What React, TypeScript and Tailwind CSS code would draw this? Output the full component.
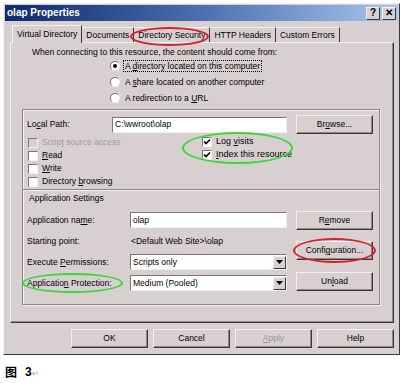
import React from 'react';

const face = "bg-[#d8d0d0]";

// underline the access key letter
const Key = ({ children }: { children: React.ReactNode }) => <span className="underline">{children}</span>;

const Button = ({ children, className = "", disabled = false }: { children: React.ReactNode; className?: string; disabled?: boolean }) => (
    <div
        className={`flex items-center justify-center h-[19px] w-[77px] ${face} border border-t-[#f4f0f0] border-l-[#f4f0f0] border-r-[#3c3838] border-b-[#3c3838] shadow-[inset_-1px_-1px_0_#8c8686] ${disabled ? "text-[#9a9494]" : ""} ${className}`}
    >
        {children}
    </div>
);

const Radio = ({ checked = false }: { checked?: boolean }) => (
    <div className="w-[10px] h-[10px] rounded-full bg-white border border-t-[#7c7676] border-l-[#7c7676] border-r-[#f4f0f0] border-b-[#f4f0f0] flex items-center justify-center shrink-0">
        {checked && <div className="w-[4px] h-[4px] rounded-full bg-black" />}
    </div>
);

const Check = ({ checked = false, disabled = false }: { checked?: boolean; disabled?: boolean }) => (
    <div
        className={`w-[10px] h-[10px] shrink-0 border border-t-[#7c7676] border-l-[#7c7676] border-r-[#f4f0f0] border-b-[#f4f0f0] flex items-center justify-center ${disabled ? face : "bg-white"}`}
    >
        {checked && (
            <svg width="8" height="8" viewBox="0 0 8 8">
                <path d="M1 3.5 L3 5.5 L7 1.5" stroke="#000" strokeWidth="1.6" fill="none" />
            </svg>
        )}
    </div>
);

const Field = ({ children, width }: { children?: React.ReactNode; width: string }) => (
    <div className={`${width} h-[16px] bg-white border border-t-[#7c7676] border-l-[#7c7676] border-r-[#f4f0f0] border-b-[#f4f0f0] flex items-center pl-[2px]`}>
        {children}
    </div>
);

const Select = ({ value }: { value: string }) => (
    <div className="w-[157px] h-[16px] bg-white border border-t-[#7c7676] border-l-[#7c7676] border-r-[#f4f0f0] border-b-[#f4f0f0] flex items-center justify-between pl-[2px]">
        <span>{value}</span>
        <div className={`w-[13px] h-[13px] ${face} border border-t-[#f4f0f0] border-l-[#f4f0f0] border-r-[#3c3838] border-b-[#3c3838] flex items-center justify-center`}>
            <svg width="7" height="4" viewBox="0 0 7 4">
                <path d="M0 0 H7 L3.5 4 Z" fill="#000" />
            </svg>
        </div>
    </div>
);

const Tab = ({ label, active = false }: { label: React.ReactNode; active?: boolean }) => (
    <div
        className={
            active
                ? `h-[18px] px-[4px] flex items-center ${face} border border-b-0 border-t-[#f4f0f0] border-l-[#f4f0f0] border-r-[#3c3838] relative z-10`
                : `h-[16px] px-[4px] flex items-center border-r border-r-[#3c3838] border-t border-t-[#f4f0f0]`
        }
    >
        {label}
    </div>
);

const Ellipse = ({ className }: { className: string }) => (
    <div className={`absolute rounded-[50%] pointer-events-none ${className}`} />
);

const App: React.FC = () => {
    return (
        <div className="w-[404px] h-[383px] bg-white relative font-['Liberation_Sans',Arial,sans-serif] text-[8.5px] text-black leading-none overflow-hidden">
            <div className={`ml-[3px] mt-[3px] w-[397px] h-[352px] ${face} border border-t-[#f4f0f0] border-l-[#f4f0f0] border-r-[#3c3838] border-b-[#3c3838] p-[1px] flex flex-col`}>
                {/* title bar */}
                <div className="h-[16px] bg-gradient-to-r from-[#0c2a6c] via-[#4d6fae] to-[#a8c8ee] flex items-center justify-between pl-[2px] pr-[2px]">
                    <span className="text-white font-bold text-[10px]">olap Properties</span>
                    <div className="flex gap-[2px]">
                        <div className={`w-[14px] h-[13px] ${face} border border-t-[#f4f0f0] border-l-[#f4f0f0] border-r-[#3c3838] border-b-[#3c3838] flex items-center justify-center font-bold text-[10px]`}>?</div>
                        <div className={`w-[14px] h-[13px] ${face} border border-t-[#f4f0f0] border-l-[#f4f0f0] border-r-[#3c3838] border-b-[#3c3838] flex items-center justify-center font-bold text-[10px]`}>✕</div>
                    </div>
                </div>

                {/* tabs */}
                <div className="mt-[4px] pl-[7px] flex items-end h-[18px]">
                    <Tab active label="Virtual Directory" />
                    <Tab label="Documents" />
                    <Tab label="Directory Security" />
                    <Tab label="HTTP Headers" />
                    <Tab label="Custom Errors" />
                </div>

                {/* tab panel */}
                <div className={`-mt-[1px] ml-[5px] w-[384px] h-[281px] border border-t-[#f4f0f0] border-l-[#f4f0f0] border-r-[#3c3838] border-b-[#3c3838] shadow-[inset_-1px_-1px_0_#8c8686] flex flex-col`}>
                    <div className="mt-[4px] pl-[21px] h-[11px] flex items-center">When connecting to this resource, the content should come from:</div>
                    <div className="pl-[99px] flex flex-col">
                        <div className="h-[16px] flex items-center gap-[4px]">
                            <Radio checked />
                            <span className="outline outline-1 outline-dotted outline-black px-[1px] py-[1px]">A <Key>d</Key>irectory located on this computer</span>
                        </div>
                        <div className="h-[16px] flex items-center gap-[5px]">
                            <Radio />
                            <span>A <Key>s</Key>hare located on another computer</span>
                        </div>
                        <div className="h-[16px] flex items-center gap-[5px]">
                            <Radio />
                            <span>A redirection to a <Key>U</Key>RL</span>
                        </div>
                    </div>

                    {/* group box */}
                    <div className="mt-[3px] ml-[11px] w-[358px] h-[196px] border border-[#8c8686] shadow-[1px_1px_0_#f4f0f0,inset_1px_1px_0_#f4f0f0] flex flex-col">
                        <div className="mt-[5px] pl-[4px] flex items-center h-[19px]">
                            <span className="w-[85px]">Lo<Key>c</Key>al Path:</span>
                            <Field width="w-[175px]">C:\wwroot\olap</Field>
                            <Button className="ml-[9px]">Br<Key>o</Key>wse...</Button>
                        </div>

                        <div className="mt-[2px] flex">
                            <div className="pl-[5px] w-[179px] flex flex-col">
                                <div className="h-[13px] flex items-center gap-[4px] text-[#a09a9a]">
                                    <Check disabled />
                                    <span>Scrip<Key>t</Key> source access</span>
                                </div>
                                <div className="h-[13px] flex items-center gap-[4px]">
                                    <Check />
                                    <span><Key>R</Key>ead</span>
                                </div>
                                <div className="h-[13px] flex items-center gap-[4px]">
                                    <Check />
                                    <span><Key>W</Key>rite</span>
                                </div>
                                <div className="h-[13px] flex items-center gap-[4px]">
                                    <Check />
                                    <span>Directory <Key>b</Key>rowsing</span>
                                </div>
                            </div>
                            <div className="-mt-[1px] flex flex-col">
                                <div className="h-[13px] flex items-center gap-[4px]">
                                    <Check checked />
                                    <span className="text-[9px]">Log <Key>v</Key>isits</span>
                                </div>
                                <div className="h-[13px] flex items-center gap-[4px]">
                                    <Check checked />
                                    <span className="text-[9px]"><Key>I</Key>ndex this resource</span>
                                </div>
                            </div>
                        </div>

                        <div className="mt-[1px] h-[2px] border-t border-t-[#8c8686] border-b border-b-[#f4f0f0]" />
                        <div className="mt-[1px] pl-[6px] h-[12px] flex items-center">Application Settings</div>

                        <div className="mt-[7px] pl-[4px] flex">
                            <div className="w-[269px] flex flex-col pt-[1px]">
                                <div className="h-[16px] flex items-center">
                                    <span className="w-[103px]">Application na<Key>m</Key>e:</span>
                                    <Field width="w-[157px]">olap</Field>
                                </div>
                                <div className="mt-[6px] h-[14px] flex items-center">
                                    <span className="w-[104px]">Starting point:</span>
                                    <span>&lt;Default Web Site&gt;\olap</span>
                                </div>
                                <div className="mt-[6px] h-[16px] flex items-center">
                                    <span className="w-[103px]">Execute <Key>P</Key>ermissions:</span>
                                    <Select value="Scripts only" />
                                </div>
                                <div className="mt-[5px] h-[16px] flex items-center">
                                    <span className="w-[103px]">Applicatio<Key>n</Key> Protection:</span>
                                    <Select value="Medium (Pooled)" />
                                </div>
                            </div>
                            <div className="flex flex-col">
                                <Button>R<Key>e</Key>move</Button>
                                <Button className="mt-[11px]">Confi<Key>g</Key>uration...</Button>
                                <Button className="mt-[12px]">Un<Key>l</Key>oad</Button>
                            </div>
                        </div>
                    </div>
                </div>

                {/* dialog buttons */}
                <div className="mt-[6px] pr-[4px] flex justify-end gap-[5px]">
                    <Button className="w-[66px]">OK</Button>
                    <Button className="w-[65px]">Cancel</Button>
                    <Button className="w-[65px]" disabled><Key>A</Key>pply</Button>
                    <Button className="w-[65px]">Help</Button>
                </div>
            </div>

            <div className="mt-[11px] ml-[5px] flex items-end gap-[8px] font-['Noto_Sans_CJK_SC',sans-serif] font-bold text-[12px]">
                <span>图</span>
                <span className="font-['Liberation_Sans',sans-serif]">3<span className="font-normal text-[8px] text-[#999]">↵</span></span>
            </div>

            {/* hand-drawn annotations */}
            <Ellipse className="left-[130px] top-[27px] w-[79px] h-[19px] border-2 border-[#d8202a]" />
            <Ellipse className="left-[293px] top-[238px] w-[83px] h-[25px] border-2 border-[#d8202a]" />
            <Ellipse className="left-[182px] top-[132px] w-[111px] h-[32px] border-2 border-[#38d838]" />
            <Ellipse className="left-[22px] top-[273px] w-[101px] h-[20px] border-2 border-[#38d838]" />
        </div>
    );
};

export default App;
